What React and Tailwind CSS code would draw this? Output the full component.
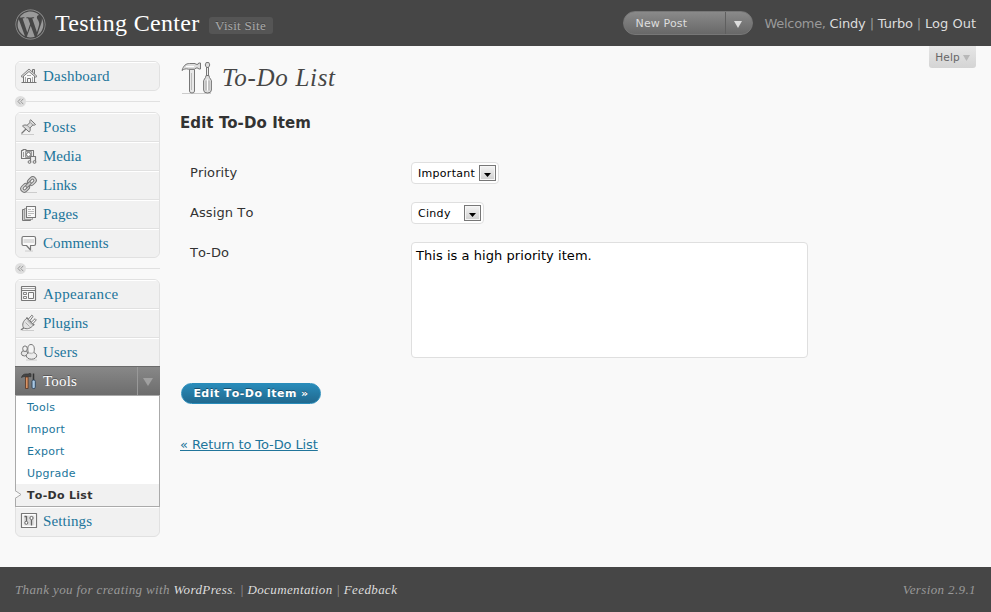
import React from 'react';
import { FaWordpress } from 'react-icons/fa';

const serif = "font-['Liberation_Serif',serif]";

function Icon({ children }) {
  return (
    <svg className="h-[18px] w-[18px] shrink-0" viewBox="0 0 18 18" fill="none" stroke="#777" strokeWidth="1" strokeLinejoin="round">
      {children}
    </svg>
  );
}

const HomeIcon = () => (
  <Icon>
    <path d="M12.500 5V2.500h2V7" fill="#ddd" />
    <path d="M3.500 8.500v7h11v-7L9 3.500z" fill="#f8f8f8" />
    <path d="M1 9.300L9 2l8 7.300-1.200 1L9 4.500 2.200 10.300z" fill="#ddd" strokeWidth=".9" />
    <path d="M7.500 15.500v-4h3v4" />
    <path d="M5.500 10v5M12.500 10v5M7 8.500h4" stroke="#aaa" />
    <path d="M1.500 15.500h15" />
  </Icon>
);

const PinIcon = () => (
  <Icon>
    <path d="M1 16.500h13" stroke="#ccc" />
    <path d="M1.500 15.500L6.500 10.500" strokeWidth="1.300" />
    <path d="M2.500 8c1.500-1.500 3.500-1 4.500-.7L10 4.500c-.4-1.200-.1-2.100.6-2.800l5 4.800c-.8.7-1.700.8-2.800.5L10 10c.5 1.600.3 3-.8 4z" fill="#dcdcdc" />
    <path d="M10.300 4.500l3 3M7 7.300l3.200 3" stroke="#999" />
  </Icon>
);

const MediaIcon = () => (
  <Icon>
    <path d="M1.500 3.500h1.500v-1h3v1h7.500v8h-12z" fill="#f2f2f2" strokeWidth="1.100" />
    <path d="M3.500 5v5" stroke="#999" />
    <rect x="5.500" y="4.500" width="6" height="6" fill="#c8c8c8" stroke="#999" />
    <circle cx="8.500" cy="7.500" r="2" fill="#fff" />
    <path d="M10.500 15V9.500h5V15" stroke="#777" fill="#eee" strokeWidth="1.200" />
    <circle cx="9.500" cy="15" r="1.400" fill="#ddd" />
    <circle cx="14.500" cy="15" r="1.400" fill="#ddd" />
  </Icon>
);

const LinkIcon = () => (
  <Icon>
    <path d="M4 16.500h13" stroke="#ccc" />
    <g transform="rotate(-45 8.500 8.500)">
      <rect x="-1" y="5" width="9.500" height="7" rx="3.500" fill="#d4d4d4" />
      <rect x="1.500" y="7.200" width="4.500" height="2.600" rx="1.300" fill="#fafafa" />
      <rect x="8.500" y="5" width="9.500" height="7" rx="3.500" fill="#d4d4d4" />
      <rect x="11" y="7.200" width="4.500" height="2.600" rx="1.300" fill="#fafafa" />
      <rect x="5.200" y="7.200" width="6.600" height="2.600" rx="1.300" fill="#ccc" />
    </g>
  </Icon>
);

const PagesIcon = () => (
  <Icon>
    <path d="M2.500 4.500h8v11h-8z" fill="#ccc" />
    <path d="M4.500 3.500h8v11h-8z" fill="#ddd" strokeWidth=".6" />
    <path d="M6.500 1.500h9v11h-9z" fill="#fafafa" strokeWidth="1.100" />
    <path d="M8 4.500h3M12 4.500h2M8 6.500h6M8 8.500h6M8 10.500h3" stroke="#bbb" />
  </Icon>
);

const CommentIcon = () => (
  <Icon>
    <path d="M5 17h8" stroke="#ccc" />
    <path d="M3.500 2.500h10.500q1.500 0 1.500 1.500v6q0 1.500-1.500 1.500H10.500v4.500l-4-4.500h-3Q2 11.500 2 10V4q0-1.500 1.500-1.500z" fill="#fafafa" strokeWidth="1.200" />
    <path d="M3.500 5h10.500v4h-10.500z" fill="#ddd" stroke="none" />
  </Icon>
);

const AppearanceIcon = () => (
  <Icon>
    <rect x="1.500" y="1.500" width="14" height="14" rx=".5" fill="#f8f8f8" strokeWidth="1.200" />
    <path d="M2 3.500h13" stroke="#aaa" />
    <path d="M2 5.500h13" />
    <path d="M3.500 7.500h3v2h-3zM3.500 11.500h3v2h-3z" strokeWidth=".9" />
    <path d="M8.500 7.500h5v6h-5z" />
  </Icon>
);

const PluginIcon = () => (
  <Icon>
    <path d="M2 16.500h12" stroke="#ccc" />
    <path d="M.8 15.500c2 .3 2-1.300 3.700-2.500" strokeWidth="1.500" />
    <path d="M3.500 13.800C1.800 10.500 3 7 7 4l6.800 6.700c-3.300 4-7 5-10.300 3.100z" fill="#e2e2e2" />
    <path d="M6.500 3.500l7.700 7.700" strokeWidth="1.400" />
    <path d="M8.500 5l3.300-3.800 1.300 1.200L10 6.500M11.500 8l3.600-3.300 1.200 1.200L13 9.500" fill="#fafafa" />
    <path d="M5.500 8.500l4 4M7.300 6.700l4 4" stroke="#aaa" />
  </Icon>
);

const UsersIcon = () => (
  <Icon>
    <path d="M6 17h11" stroke="#ccc" />
    <ellipse cx="4.500" cy="10.300" rx="3.200" ry="2.700" fill="#e6e6e6" />
    <ellipse cx="5" cy="5.700" rx="2.300" ry="2.800" fill="#f2f2f2" />
    <ellipse cx="11.500" cy="12.700" rx="5.200" ry="3.500" fill="#ececec" />
    <path d="M8.500 9.700C7.500 7.500 7 1.500 11 1.500s3.700 6 2.700 8.200" fill="#f4f4f4" />
    <path d="M8.700 9.800c1.500 1.200 3.400 1.200 4.900 0" stroke="#bbb" />
  </Icon>
);

const ToolsIcon = () => (
  <Icon>
    <path d="M1.500 5.500C2 3 4 2 6 2h3v-.5l2 .3v3l-2-.3H5c-1.500 0-2.500.3-3.500 1z" fill="#444" stroke="#333" strokeWidth=".7" />
    <path d="M5.500 5h2.600v11.500H5.500z" fill="#d99465" stroke="#553322" strokeWidth=".8" />
    <path d="M13.500 1.500v7" stroke="#333" strokeWidth="1.500" />
    <rect x="12" y="8" width="3.300" height="8.500" rx="1.300" fill="#a9c8e4" stroke="#2b4157" strokeWidth=".9" />
  </Icon>
);

const SettingsIcon = () => (
  <Icon>
    <rect x="1.500" y="1.500" width="15" height="14" strokeWidth="1.200" fill="#fff" />
    <path d="M3.500 3.500h11v10h-11z" fill="#dcdcdc" stroke="none" />
    <path d="M6.500 4v5M4.500 4.500h2M11.500 8v5.500" stroke="#666" strokeWidth="1.300" />
    <circle cx="6.300" cy="10.800" r="1.500" fill="#fff" stroke="#666" />
    <circle cx="11.500" cy="6" r="1.600" fill="#fff" stroke="#666" />
  </Icon>
);

function Item({ icon: I, label, tracking, last }) {
  return (
    <a className={`flex items-center border-t border-t-white bg-[#f1f1f1] pb-px pl-[4px] ${last ? 'h-[28px] rounded-b-[5px]' : 'h-[29px] border-b border-b-[#e1e1e1]'}`}>
      <I />
      <span className={`ml-[5px] ${serif} text-[15px] leading-[18px] text-[#21759b] ${tracking}`}>{label}</span>
    </a>
  );
}

function Group({ children }) {
  return <div className="overflow-hidden rounded-[6px] border border-[#e1e1e1] bg-[#f1f1f1]">{children}</div>;
}

function Separator() {
  return (
    <div className="flex h-[21px] items-center">
      <div className="flex h-[11px] w-[11px] items-center justify-center rounded-full bg-[#dfdfdf]">
        <svg width="7" height="7" viewBox="0 0 7 7" fill="none" stroke="#999">
          <path d="M3.500 .8L1 3.500l2.500 2.700M6.300 .8L3.800 3.500l2.500 2.700" />
        </svg>
      </div>
      <div className="h-px flex-1 bg-[#e1e1e1]" />
    </div>
  );
}

function SubItem({ children }) {
  return <a className="flex h-[22px] items-center pt-[2px] pl-[11px] text-[11px] tracking-[0.25px] text-[#21759b]">{children}</a>;
}

function Sidebar() {
  return (
    <nav className="w-[145px] shrink-0 pt-[15px]">
      <Group>
        <Item icon={HomeIcon} label="Dashboard" tracking="tracking-[0.2px]" last />
      </Group>
      <Separator />
      <Group>
        <Item icon={PinIcon} label="Posts" tracking="tracking-[0.3px]" />
        <Item icon={MediaIcon} label="Media" tracking="tracking-[0px]" />
        <Item icon={LinkIcon} label="Links" tracking="tracking-[-0.1px]" />
        <Item icon={PagesIcon} label="Pages" tracking="tracking-[0px]" />
        <Item icon={CommentIcon} label="Comments" tracking="tracking-[0.1px]" last />
      </Group>
      <Separator />
      <div className="rounded-[6px] border border-[#e1e1e1] bg-[#f1f1f1]">
        <div className="overflow-hidden rounded-t-[5px]">
          <Item icon={AppearanceIcon} label="Appearance" tracking="tracking-[0.4px]" />
          <Item icon={PluginIcon} label="Plugins" tracking="tracking-[0px]" />
          <Item icon={UsersIcon} label="Users" tracking="tracking-[0.1px]" last />
        </div>
        <div className="-mx-px flex h-[29px] items-center border-t border-t-[#6a6a6a] bg-linear-to-b from-[#888] to-[#6d6d6d] pl-[5px]">
          <ToolsIcon />
          <span className={`ml-[5px] flex-1 ${serif} text-[15px] leading-[18px] tracking-[0.2px] text-white [text-shadow:0_-1px_0_#555]`}>Tools</span>
          <div className="flex h-full w-[23px] items-center justify-center border-l border-l-[#999] pt-[2px] pr-[2px]">
            <svg width="10" height="8" viewBox="0 0 10 8"><path d="M0 0h10L5 8z" fill="#a0a0a0" /></svg>
          </div>
        </div>
        <div className="relative -mx-px border border-[#aaa] bg-white">
          <SubItem>Tools</SubItem>
          <SubItem>Import</SubItem>
          <SubItem>Export</SubItem>
          <SubItem>Upgrade</SubItem>
          <a className="flex h-[22px] items-center bg-[#f1f1f1] pt-[2px] pl-[11px] text-[11px] font-bold tracking-[0.3px] text-[#333] [font-kerning:none]">To-Do List</a>
          <svg className="absolute -left-px bottom-[7px]" width="7" height="9" viewBox="0 0 7 9">
            <path d="M0 .5L6 4.500 0 8.500" fill="#f9f9f9" stroke="#aaa" />
          </svg>
        </div>
        <div className="h-[29px]">
          <Item icon={SettingsIcon} label="Settings" tracking="tracking-[0.1px]" last />
        </div>
      </div>
    </nav>
  );
}

function BigToolsIcon() {
  return (
    <svg className="mt-[2px] h-[34px] w-[34px]" viewBox="0 0 34 34" fill="none" stroke="#777">
      <path d="M2 32.500h29" stroke="#ccc" />
      <path d="M9.500 8.500h5V30q0 2-2.500 2t-2.500-2z" fill="#e8e8e8" />
      <path d="M11.500 12v17" stroke="#bbb" />
      <path d="M2 9.500C3.500 4.500 6 2.500 9.500 2.500H15l1 .8h2l.7-1.300h1.800v6h-1.800L18 7h-2l-1.500 1.200H8.500C6 7.200 3.500 8.200 2 9.500z" fill="#ddd" />
      <path d="M6 5.500h8" stroke="#fff" />
      <path d="M26.500 6h2v11h-2z" fill="#eee" />
      <path d="M26.200 1.500h2.600l1 2.500-1.300 2.500h-2L25.200 4z" fill="#ddd" />
      <path d="M26 14.500h3q0 2 1.500 3.500t.9 4V29q0 3-3.900 3t-3.900-3v-7q-.5-2.500.9-4T26 14.500z" fill="#ddd" />
      <path d="M26 19.500v10M29 19.500v10" stroke="#aaa" />
      <path d="M27.500 18.500v11" stroke="#fff" />
    </svg>
  );
}

function Select({ children, width }) {
  return (
    <div className={`flex h-[22px] items-center justify-between rounded-[4px] border border-[#dfdfdf] bg-white pr-[2px] pl-[6px] text-[11px] tracking-[0.3px] text-black ${width}`}>
      <span className="pt-[2px]">{children}</span>
      <span className="flex h-[16px] w-[17px] items-end justify-center border border-[#777] bg-linear-to-b from-[#f4f4f4] to-[#cfcfcf] pb-[3px] shadow-[inset_0_0_0_1px_#f6f6f6]">
        <svg width="7" height="4" viewBox="0 0 7 4"><path d="M0 0h7L3.500 4z" fill="#000" /></svg>
      </span>
    </div>
  );
}

function Row({ label, children }) {
  return (
    <div className="flex">
      <label className="w-[221px] pt-[2px] text-[13px] leading-[18px] tracking-[0.1px] text-[#333] [font-kerning:none]">{label}</label>
      {children}
    </div>
  );
}

export default function App() {
  return (
    <div className="flex h-[612px] w-[991px] flex-col overflow-hidden bg-[#f9f9f9] font-['DejaVu_Sans',sans-serif] whitespace-nowrap">
      <header className="flex h-[46px] shrink-0 items-center bg-[#464646] px-[15px]">
        <FaWordpress className="mt-[2px] h-[31px] w-[31px] text-[#999]" />
        <h1 className={`ml-[9px] ${serif} text-[24px] leading-[30px] tracking-[0.3px] text-white`}>Testing Center</h1>
        <a className={`mt-[5px] ml-[9px] flex h-[17px] w-[64px] items-center justify-center rounded-[3px] bg-[#555] pt-px ${serif} text-[13px] tracking-[0.3px] text-[#aaa] [text-shadow:0_-1px_0_#3f3f3f]`}>Visit Site</a>
        <div className="ml-auto flex h-[24px] w-[130px] items-center rounded-full border border-[#777] bg-linear-to-b from-[#8a8a8a] to-[#686868] text-[11px] tracking-[0.15px] text-[#ddd]">
          <span className="flex-1 pt-[2px] pl-[12px]">New Post</span>
          <span className="flex h-full w-[27px] items-center border-l border-l-[#5f5f5f] pt-[2px] pl-[8px]">
            <svg width="8" height="7" viewBox="0 0 8 7"><path d="M0 0h8L4 7z" fill="#ddd" /></svg>
          </span>
        </div>
        <div className="ml-[12px] pt-px text-[13px] tracking-[-0.15px] text-[#999]">
          <span className="tracking-[-0.3px]">Welcome, </span><a className="text-[#ddd]">Cindy</a> | <a className="text-[#ddd]">Turbo</a> | <a className="tracking-[0px] text-[#ddd]">Log Out</a>
        </div>
      </header>

      <div className="flex flex-1 px-[15px]">
        <Sidebar />
        <main className="ml-[20px] flex-1">
          <div className="flex h-[62px] justify-between">
            <div className="flex items-center">
              <BigToolsIcon />
              <h2 className={`mt-[2px] ml-[8px] ${serif} text-[25px] tracking-[0.7px] text-[#464646] italic`}>To-Do List</h2>
            </div>
            <a className="flex h-[22px] w-[47px] items-center justify-center gap-[3px] rounded-b-[3px] bg-linear-to-b from-[#e6e6e6] to-[#d4d4d4] pt-px text-[10.500px] tracking-[0.1px] text-[#666]">
              Help
              <svg width="7" height="6" viewBox="0 0 7 6"><path d="M0 0h7L3.500 6z" fill="#b8b8b8" /></svg>
            </a>
          </div>
          <h3 className="mt-[5px] text-[15px] leading-[20px] font-bold tracking-[0.08px] text-[#333]">Edit To-Do Item</h3>
          <div className="mt-[29px] flex flex-col gap-[18px] pl-[10px]">
            <Row label="Priority"><Select width="w-[88px]">Important</Select></Row>
            <Row label="Assign To"><Select width="w-[73px]">Cindy</Select></Row>
            <Row label="To-Do">
              <div className="h-[116px] w-[397px] rounded-[4px] border border-[#dfdfdf] bg-white px-[4px] pt-[4px] text-[13px] leading-[18px] tracking-[0.05px] text-black">This is a high priority item.</div>
            </Row>
          </div>
          <button className="mt-[25px] ml-px block h-[21px] w-[140px] rounded-full border border-[#298cba] bg-linear-to-b from-[#298cba] to-[#21698f] text-[11px] leading-[20px] font-bold tracking-[0.45px] text-white [font-kerning:none] [text-shadow:0_-1px_0_#1a4f6c]">Edit To-Do Item »</button>
          <a className="mt-[32px] block text-[13px] leading-[18px] tracking-[-0.1px] text-[#21759b] underline">« Return to To-Do List</a>
        </main>
      </div>

      <footer className={`flex h-[45px] shrink-0 items-center justify-between bg-[#464646] px-[15px] ${serif} text-[13px] text-[#999] italic`}>
        <p className="tracking-[0.38px]">
          Thank you for creating with <a className="text-[#ddd]">WordPress</a>. | <a className="text-[#ddd]">Documentation</a> | <a className="text-[#ddd]">Feedback</a>
        </p>
        <p className="tracking-[0.38px]">Version 2.9.1</p>
      </footer>
    </div>
  );
}
